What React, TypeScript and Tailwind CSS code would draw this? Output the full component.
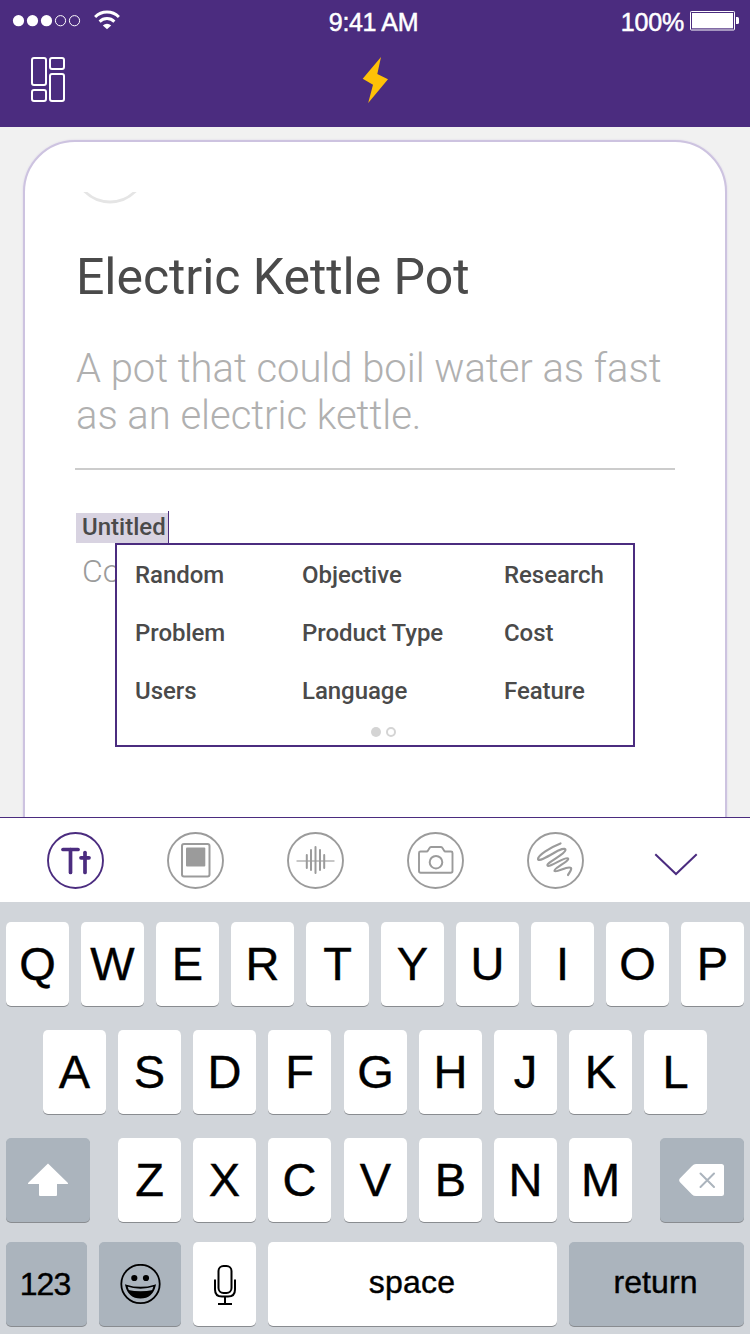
import type { ReactNode } from "react";

const purple = "#4b2c7f";

const topicColumns = [
  { topics: ["Random", "Problem", "Users"], width: "w-[167px]" },
  { topics: ["Objective", "Product Type", "Language"], width: "w-[202px]" },
  { topics: ["Research", "Cost", "Feature"], width: "w-[120px]" },
];

function StatusBar() {
  return (
    <div className="grid h-10 grid-cols-3 text-[25px] text-white [-webkit-text-stroke:0.5px_white]">
      <div className="flex pl-3 pt-2">
        <svg width="112" height="26" viewBox="12 8 112 26" fill="none">
          {[18.5, 32.5, 46.5].map((x) => (
            <circle key={x} cx={x} cy="20.7" r="5.6" fill="white" />
          ))}
          {[60.5, 74.5].map((x) => (
            <circle key={x} cx={x} cy="20.7" r="5.1" stroke="white" />
          ))}
          <path d="M95.1 17a16.700 16.700 0 0 1 23.800 0M99.600 21.600a10.500 10.500 0 0 1 14.800 0" stroke="white" strokeWidth="2.9" />
          <path d="M102.8 25.400a6 6 0 0 1 8.4 0L107 29.3z" fill="white" />
        </svg>
      </div>
      <div className="flex justify-center pt-2 leading-7 whitespace-nowrap">
        <span className="-ml-[3px] tracking-[-0.350px]">9:41 AM</span>
      </div>
      <div className="flex justify-end gap-1.5 pr-[10px] pt-2 leading-7">
        <span className="tracking-[-0.2px]">100%</span>
        <svg className="mt-[3px]" width="50" height="20" viewBox="0 0 50 20" fill="none">
          <rect x="0.5" y="0.5" width="44" height="18.5" rx="0.8" stroke="white" />
          <rect x="2" y="2" width="41" height="15.3" fill="white" />
          <path d="M46 6h1.5q1.5 0 1.5 1.500v4q0 1.500-1.500 1.500H46z" fill="white" />
        </svg>
      </div>
    </div>
  );
}

function NavBar() {
  return (
    <div className="flex h-[87px] pl-[30px] pt-4">
      <svg width="36" height="48" viewBox="30 56 36 48" fill="none" stroke="white" strokeWidth="2">
        <rect x="32" y="58" width="14" height="27" rx="2" />
        <rect x="50" y="58" width="14" height="11" rx="2" />
        <rect x="32" y="90" width="14" height="11" rx="2" />
        <rect x="50" y="74" width="14" height="27" rx="2" />
      </svg>
      <svg className="ml-[294px]" width="30" height="48" viewBox="360 56 30 48" fill="#ffc107">
        <path d="M381 57L377.300 74L388 79.300L368.200 103L373 84.800L362.700 78.700z" />
      </svg>
    </div>
  );
}

function TopicMenu() {
  return (
    <div className="absolute top-[401px] left-[90px] h-[204px] w-[520px] border-2 border-[#4b2c7f] bg-white pt-[5px] pl-[18px]">
      <div className="flex">
        {topicColumns.map(({ topics, width }) => (
          <div key={topics[0]} className={`flex flex-col ${width}`}>
            {topics.map((topic) => (
              <div
                key={topic}
                className="h-[58px] pt-1 text-[24px] leading-[42px] font-medium tracking-[-0.050px] whitespace-nowrap"
              >
                {topic}
              </div>
            ))}
          </div>
        ))}
      </div>
      <div className="mt-[3px] flex gap-[5px] pl-[236px]">
        <div className="h-[10px] w-[10px] rounded-full bg-[#d4d4d4]" />
        <div className="h-[10px] w-[10px] rounded-full border-2 border-[#d4d4d4]" />
      </div>
    </div>
  );
}

function NoteCard() {
  return (
    <main className="h-[690px] overflow-hidden bg-[#f1f1f1] px-[23px] pt-[13px] font-['Roboto',sans-serif] text-[#4a4a4a]">
      <article className="relative h-[760px] rounded-[52px] border-2 border-[#cdc3e0] bg-white pr-[50px] pl-[51px] shadow-[0_0_2px_#d8d0e6]">
        <svg className="mt-[50px] ml-[4px] block" width="60" height="14" viewBox="80 192 60 14" fill="none">
          <circle cx="110" cy="166.500" r="35.500" stroke="#e5e5e5" strokeWidth="2.800" />
        </svg>
        <h1 className="mt-[42px] text-[50px] leading-[59px] tracking-[-0.050px] whitespace-nowrap">Electric Kettle Pot</h1>
        <p className="mt-[38px] w-[620px] text-[40px] leading-[47px] font-light tracking-[-0.040px] text-[#b0b0b0]">
          A pot that could boil water as fast
          <br />
          as an electric kettle.
        </p>
        <div className="-ml-px mt-[29px] h-[2px] w-[600px] bg-[#cccccc]" />
        <div className="mt-[41px] flex h-8 items-end">
          <div className="flex h-[30px] w-[92px] bg-[#d8d3e1] pl-[6px] text-[24px] leading-[28px] font-medium">Untitled</div>
          <div className="h-8 w-px bg-[#4b2c7f]" />
        </div>
        <div className="mt-[9px] w-[40px] overflow-hidden pl-[6px] text-[32px] leading-[38px] font-light text-[#9b9b9b]">Co</div>
        <TopicMenu />
      </article>
    </main>
  );
}

function Tool({ active = false, children }: { active?: boolean; children?: ReactNode }) {
  return (
    <button className="h-[57px] w-[57px]">
      <svg
        width="57"
        height="57"
        viewBox="0 0 57 57"
        fill="none"
        stroke={active ? purple : "#9b9b9b"}
        strokeWidth="2"
        strokeLinecap="round"
        strokeLinejoin="round"
      >
        <circle cx="28.500" cy="28.500" r="27.500" strokeWidth="1.900" />
        {children}
      </svg>
    </button>
  );
}

function Toolbar() {
  return (
    <div className="flex h-[85px] gap-[63px] border-t border-[#4b2c7f] bg-white pt-[14px] pl-[47px]">
      <Tool active>
        <g strokeWidth="3.700">
          <line x1="16" y1="17.500" x2="31" y2="17.500" />
          <line x1="23.500" y1="17.500" x2="23.500" y2="40.500" />
          <line x1="38" y1="20.500" x2="38" y2="40.500" />
          <line x1="34" y1="25.800" x2="42" y2="25.800" />
        </g>
      </Tool>
      <Tool>
        <rect x="15" y="12" width="27.500" height="32.500" rx="2" />
        <rect x="19" y="15.500" width="19.300" height="19" rx="1" fill="#9b9b9b" stroke="none" />
      </Tool>
      <Tool>
        <line x1="10" y1="29" x2="47" y2="29" strokeWidth="1.400" stroke="#b5b5b5" />
        <path d="M19.800 23v13M24 18v20M28.500 15v26M33 18v20M37.200 23v13" />
      </Tool>
      <Tool>
        <path d="M13.500 19.500h6q1 0 1.500-1l1.500-2.500q.5-1 1.500-1h10q1 0 1.500 1l1.500 2.500q.5 1 1.500 1h5.500q1.500 0 1.500 1.500v18q0 1.700-1.700 1.700H13.700q-1.700 0-1.700-1.700V21q0-1.500 1.500-1.500z" strokeWidth="1.900" />
        <circle cx="29" cy="30.200" r="6.300" />
      </Tool>
      <Tool>
        <path
          d="M33.500 11.500C23 15.500 11 23.500 11 27C11 30 20 25 26 21.500C33 17 38.500 15.500 38.500 18C38.500 22 19 31 20.500 33.500C22 36 39 24 41 26.500C43 29 26 36.500 27.500 39C30 41 41 33 44 36C45 38 42.500 40 41 43"
          strokeWidth="2.200"
        />
      </Tool>
      <button className="ml-[6px] mt-[19px] h-[26px] w-[46px]">
        <svg width="46" height="26" viewBox="653 851 46 26" fill="none" stroke={purple} strokeWidth="2">
          <path d="M655.300 854.300L676 874L696.700 854.300" />
        </svg>
      </button>
    </div>
  );
}

function Key({ children, width = "w-[63px]", dark = false, text = "text-[47px] leading-[84px]" }: {
  children: ReactNode;
  width?: string;
  dark?: boolean;
  text?: string;
}) {
  return (
    <button
      className={`flex h-[84px] shrink-0 justify-center rounded-[5px] shadow-[0_1px_0_#898c90] [-webkit-text-stroke:0.4px_black] ${width} ${text} ${dark ? "bg-[#abb4bd]" : "bg-white"}`}
    >
      {children}
    </button>
  );
}

function LetterKeys({ letters }: { letters: string }) {
  return letters.split("").map((letter) => <Key key={letter}>{letter}</Key>);
}

function Keyboard() {
  return (
    <div className="flex h-[432px] flex-col bg-[#d1d5da] px-[6px] pt-5 text-black">
      <div className="flex h-[108px] gap-3">
        <LetterKeys letters="QWERTYUIOP" />
      </div>
      <div className="flex h-[108px] gap-[13px] pl-[37px]">
        <div className="flex gap-3">
          <LetterKeys letters="ASDF" />
        </div>
        <div className="flex gap-3">
          <LetterKeys letters="GHJKL" />
        </div>
      </div>
      <div className="flex h-[104px] justify-between">
        <Key dark width="w-[84px]">
          <svg className="mt-[25px]" width="42" height="34" viewBox="0 0 42 34" fill="white">
            <path d="M21 0.500L41 20q.3.900-.5.900H30V32q0 1-1 1H13q-1 0-1-1V20.900H1.500q-.8 0-.5-.9z" />
          </svg>
        </Key>
        <div className="flex gap-[13px]">
          <div className="flex gap-3">
            <LetterKeys letters="ZXC" />
          </div>
          <div className="flex gap-3">
            <LetterKeys letters="VBNM" />
          </div>
        </div>
        <Key dark width="w-[84px]">
          <svg className="mt-[26px]" width="46" height="33" viewBox="0 0 46 33">
            <path d="M17 0H42.500Q45 0 45 2.500V29.500Q45 32 42.500 32H17Q14.500 32 13 30.500L.8 18Q-.5 16.300.8 14.500L13 2Q14.800 0 17 0z" fill="white" />
            <path d="M21.500 9.500L35 23M35 9.500L21.500 23" stroke="#abb4bd" strokeWidth="2" strokeLinecap="round" />
          </svg>
        </Key>
      </div>
      <div className="flex gap-3">
        <Key dark width="w-[81px]" text="text-[32px] leading-[84px]">
          <span className="-ml-[3px] tracking-[-0.900px]">123</span>
        </Key>
        <Key dark width="w-[82px]">
          <svg className="mt-[22px]" width="41" height="41" viewBox="0 0 41 41" fill="none" stroke="black" strokeWidth="1.800">
            <circle cx="20.500" cy="20" r="19.200" />
            <circle cx="14.300" cy="14" r="3.100" fill="black" stroke="none" />
            <circle cx="26" cy="14" r="3.100" fill="black" stroke="none" />
            <path d="M6.200 21.500Q20.500 26 34.800 21.500Q32 33.500 20.500 33.500Q9 33.500 6.200 21.500z" />
            <path d="M8 26Q20.500 28.500 33 26Q29 33.500 20.500 33.500Q12 33.500 8 26z" fill="black" stroke="none" />
          </svg>
        </Key>
        <Key>
          <svg className="mt-[22px]" width="24" height="42" viewBox="0 0 24 42" fill="none" stroke="black" strokeWidth="2">
            <rect x="5.500" y="2" width="13" height="27" rx="5" />
            <path d="M2 15.500V25.500Q2 32.500 9 32.500H15Q22 32.500 22 25.500V15.500M12 32.500V40M5 40H19" />
          </svg>
        </Key>
        <Key width="w-[289px]" text="text-[32px] leading-[81px]">
          <span className="-ml-px tracking-[0.200px]">space</span>
        </Key>
        <Key dark width="w-[175px]" text="text-[32px] leading-[81px]">
          <span className="-ml-[2px] tracking-[0.100px]">return</span>
        </Key>
      </div>
    </div>
  );
}

export default function App() {
  return (
    <div className="h-[1334px] w-[750px] overflow-hidden font-['Liberation_Sans',Arial,sans-serif]">
      <header className="h-[127px] bg-[#4b2c7f]">
        <StatusBar />
        <NavBar />
      </header>
      <NoteCard />
      <Toolbar />
      <Keyboard />
    </div>
  );
}
